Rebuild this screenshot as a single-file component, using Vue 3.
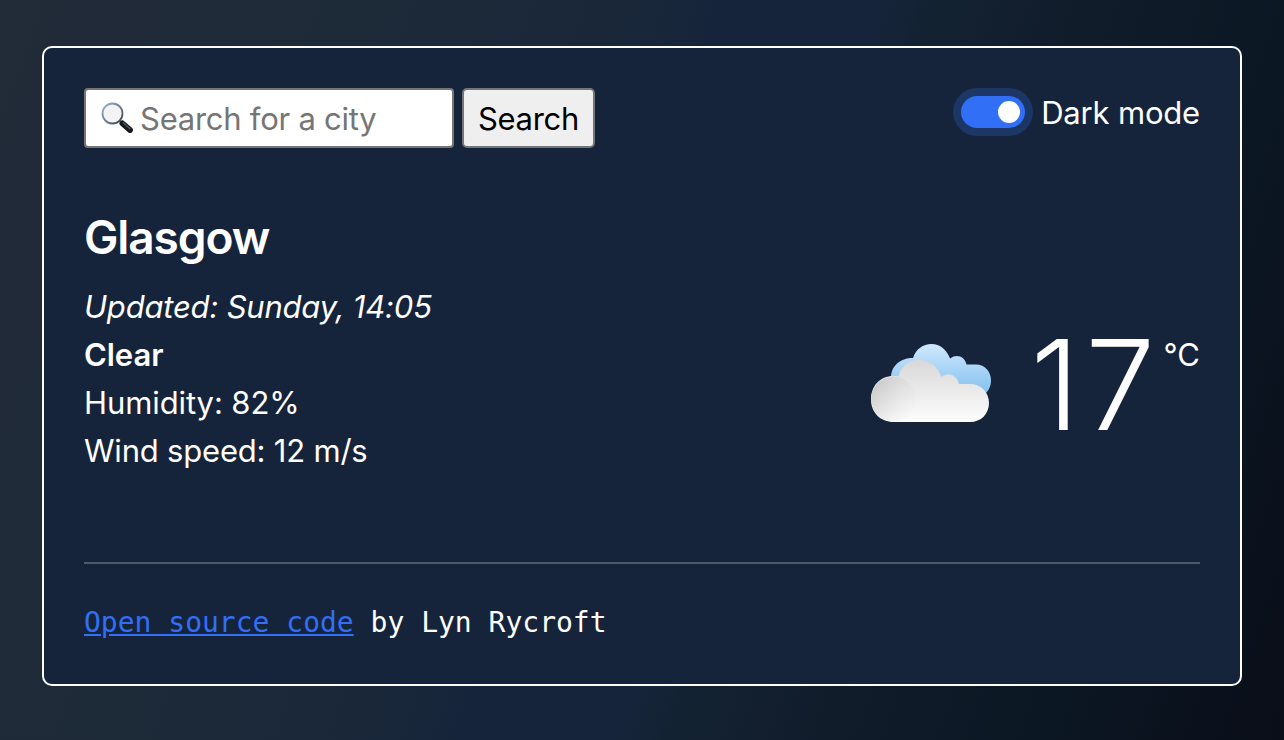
<script setup>
import { ref } from 'vue'

const city = ref('')
const darkMode = ref(true)
</script>

<template>
  <div class="page">
    <main class="card">
      <header class="top">
        <form class="search" @submit.prevent>
          <label class="field">
            <svg class="lens" viewBox="0 0 40 40" aria-hidden="true">
              <defs>
                <linearGradient id="rim" x1="0" y1="0" x2="1" y2="1">
                  <stop offset="0" stop-color="#9fb6d3" />
                  <stop offset="1" stop-color="#3b4148" />
                </linearGradient>
              </defs>
              <path d="M21.500 22.500L26 27" stroke="#8a929b" stroke-width="2.2" />
              <circle cx="14.5" cy="15.5" r="10" fill="#f3f3f4" stroke="url(#rim)" stroke-width="1.8" />
              <path d="M24.400 25.400L32 32" stroke="#15191c" stroke-width="5.8" stroke-linecap="round" />
              <path d="M25.400 24.800L32 30.800" stroke="#515b63" stroke-width="1.3" stroke-linecap="round" />
            </svg>
            <input v-model="city" type="text" placeholder="Search for a city" />
          </label>
          <button type="submit">Search</button>
        </form>
        <label class="mode">
          <span class="switch" :class="{ on: darkMode }"><i></i></span>
          <span class="mode-text">Dark mode</span>
        </label>
      </header>

      <section class="weather">
        <div class="details">
          <h1>Glasgow</h1>
          <ul>
            <li class="updated">Updated: Sunday, 14:05</li>
            <li class="sky">Clear</li>
            <li class="humidity">Humidity: 82%</li>
            <li class="wind">Wind speed: 12 m/s</li>
          </ul>
        </div>
        <div class="now">
          <svg class="cloud" viewBox="0 0 150 120" aria-hidden="true">
            <defs>
              <linearGradient id="blue" x1="0" y1="24" x2="0" y2="74" gradientUnits="userSpaceOnUse">
                <stop offset="0" stop-color="#cfe8fd" />
                <stop offset="1" stop-color="#83c0f0" />
              </linearGradient>
              <linearGradient id="grey" x1="0" y1="40" x2="0" y2="102" gradientUnits="userSpaceOnUse">
                <stop offset="0" stop-color="#d8d8d8" />
                <stop offset="1" stop-color="#fdfdfd" />
              </linearGradient>
              <linearGradient id="puff" x1="16" y1="66" x2="48" y2="92" gradientUnits="userSpaceOnUse">
                <stop offset="0" stop-color="#cdcdcd" />
                <stop offset="1" stop-color="#e6e6e6" stop-opacity="0.15" />
              </linearGradient>
            </defs>
            <path
              d="M31 58C31 46 40 38 53 38C56 29 63 24 71.500 24C80 24 87 30 90 38.500C97 33 105 37 106.500 44.500H116C125 44.500 131 52 131 60C131 66 129 70 125 74H45Z"
              fill="url(#blue)"
            />
            <path
              d="M34 102C20 102 11 92 11 79.500C11 66 20 56 33 56C36 56 37 56 38.500 56.500C41 46 49 40 59 40C70 40 78 47 81.500 57C88 51 97 55 99 64H110C121 64 129 72 129 83C129 94 121 102 110 102Z"
              fill="url(#grey)"
            />
            <circle cx="33.500" cy="79" r="22.300" fill="url(#puff)" />
          </svg>
          <span class="temp">17</span>
          <span class="unit">°C</span>
        </div>
      </section>

      <footer><a href="#">Open source code</a> by Lyn Rycroft</footer>
    </main>
  </div>
</template>

<style>
body {
  margin: 0;
}
</style>

<style scoped>
.page {
  box-sizing: border-box;
  height: 740px;
  padding: 46px 42px 54px;
  background: linear-gradient(109.6deg, #222b38 0%, #1d2a38 25%, #19273a 42%, #16243b 47%, #15243b 56%, #132231 61%, #111c2b 70%, #0c1724 84%, #0a101b 96%, #0a0e18 100%);
  color: #fff;
  font: 400 31px/48px Inter, "Liberation Sans", sans-serif;
}
.card {
  box-sizing: border-box;
  display: flex;
  flex-direction: column;
  height: 640px;
  padding: 40px;
  border: 2px solid #fff;
  border-radius: 10px;
  background: #16243b;
}
.top {
  display: flex;
  justify-content: space-between;
  align-items: flex-start;
}
.search {
  display: flex;
  gap: 8px;
}
.field {
  box-sizing: border-box;
  display: flex;
  align-items: center;
  width: 370px;
  height: 60px;
  padding: 0 12px;
  border: 2px solid #767676;
  border-radius: 4px;
  background: #fff;
}
.lens {
  flex: none;
  width: 40px;
  height: 40px;
}
input {
  flex: 1;
  min-width: 0;
  padding: 2px 0 0 2px;
  border: 0;
  outline: 0;
  background: transparent;
  font: inherit;
  letter-spacing: -0.25px;
}
input::placeholder {
  color: #757575;
}
button {
  box-sizing: border-box;
  width: 133px;
  height: 60px;
  padding: 2px 0 0;
  border: 2px solid #767676;
  border-radius: 5px;
  background: #efefef;
  color: #000;
  font: inherit;
  letter-spacing: -0.3px;
}
.mode {
  display: flex;
  align-items: center;
  height: 48px;
}
.switch {
  box-sizing: border-box;
  width: 64px;
  height: 32px;
  margin-right: 16px;
  padding: 5px;
  border-radius: 16px;
  background: #316ff6;
  box-shadow: 0 0 0 8px #1c3666;
}
.switch i {
  display: block;
  width: 22px;
  height: 22px;
  border-radius: 50%;
  background: #fff;
}
.switch.on i {
  margin-left: auto;
}
.mode-text {
  padding-top: 2px;
  letter-spacing: -0.18px;
}
.weather {
  flex: none;
  box-sizing: border-box;
  display: flex;
  justify-content: space-between;
  height: 412px;
  margin-top: 4px;
  border-bottom: 2px solid #4f5a69;
}
.details {
  padding-top: 56px;
}
h1 {
  margin: 0 0 17px;
  font-size: 46px;
  line-height: 58px;
  font-weight: 600;
  letter-spacing: -1.1px;
}
ul {
  margin: 0;
  padding: 0;
  list-style: none;
  letter-spacing: -0.2px;
}
.updated {
  font-style: italic;
}
.sky {
  font-weight: 630;
  letter-spacing: -0.05px;
}
.humidity {
  letter-spacing: -0.1px;
}
.now {
  display: flex;
  align-items: flex-start;
  padding-top: 168px;
}
.cloud {
  width: 150px;
  height: 120px;
  margin-right: 20px;
}
.temp {
  padding-top: 1px;
  font-size: 125px;
  line-height: 128px;
  font-weight: 345;
  letter-spacing: 5.5px;
}
.unit {
  margin: 11px 0 0 3px;
}
footer {
  padding-top: 39px;
  font: 28px/40px "DejaVu Sans Mono", monospace;
}
a {
  color: #316ff6;
  text-decoration: underline;
}
</style>
